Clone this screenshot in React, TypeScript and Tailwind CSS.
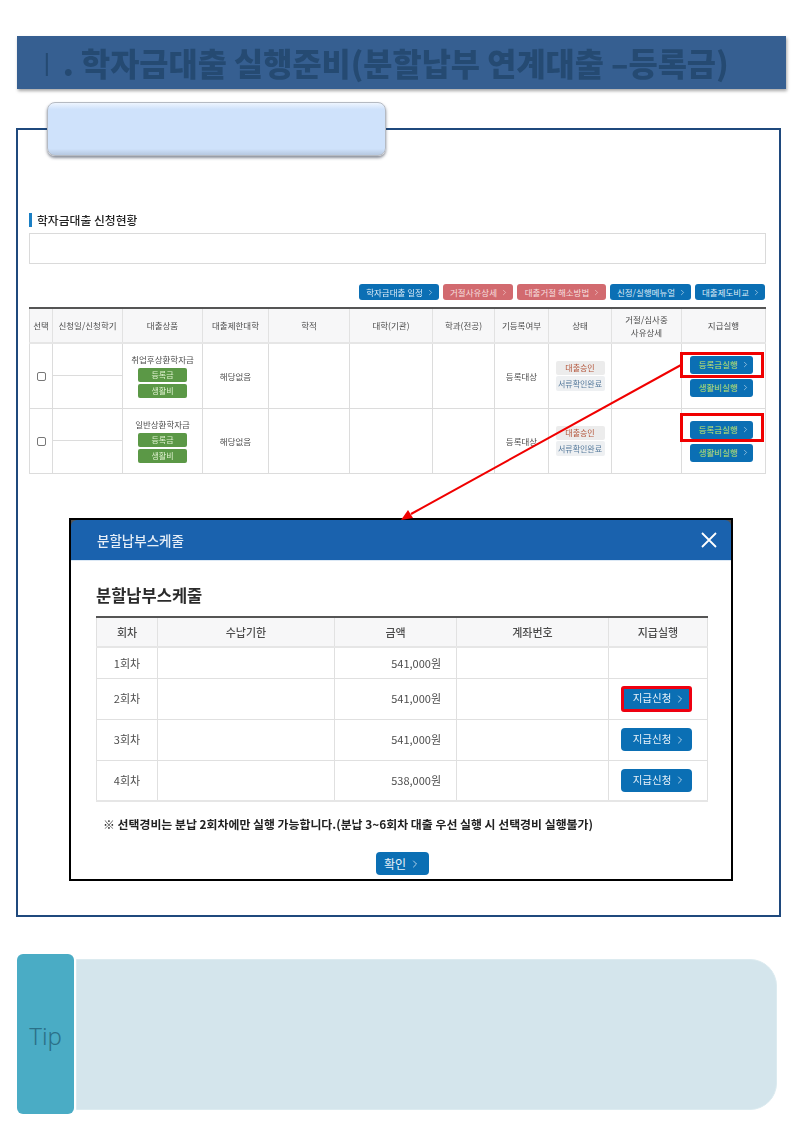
import { ChevronRight } from "lucide-react";

const sans = "font-['Noto_Sans_CJK_KR','Liberation_Sans',sans-serif]";

function Chev({ size = 9 }: { size?: number }) {
  return <ChevronRight size={size} strokeWidth={1.5} className="shrink-0" />;
}

function TopButton({ label, width, red }: { label: string; width: string; red?: boolean }) {
  return (
    <div
      className={`${width} ${red ? "bg-[#d26a6f] text-[#f6dfdf]" : "bg-[#0b6fb4] text-[#dcebf6]"} h-[16px] rounded-[3px] flex items-center justify-center gap-[3px] pl-[3px] text-[8.5px] leading-none`}
    >
      <span>{label}</span>
      <Chev />
    </div>
  );
}

function Green({ label }: { label: string }) {
  return (
    <div className="w-[49px] h-[14px] bg-[#5b9846] rounded-[2px] text-[#dff0cf] text-[8px] leading-none flex items-center justify-center">
      {label}
    </div>
  );
}

function PayButton({ label }: { label: string }) {
  return (
    <div className="w-[63px] h-[18px] bg-[#0b6fb4] rounded-[3px] text-[#bfe06a] text-[8.5px] leading-none flex items-center justify-center gap-[3px] pl-[6px]">
      <span>{label}</span>
      <span className="text-[#dcebf6]">
        <Chev />
      </span>
    </div>
  );
}

const th = "border-l border-[#e2e2e2] first:border-l-0 border-b-2 border-b-[#e6e6e6] font-normal bg-[#f7f7f8] p-0 text-center leading-[13px]";
const td = "border-l border-t border-[#dcdcdc] first:border-l-0 p-0 text-center align-middle";

function LoanRow({ product, tall }: { product: string; tall?: boolean }) {
  return (
    <tr className="h-[65px]">
      <td className={td}>
        <input type="checkbox" className="appearance-none block mx-auto w-[9px] h-[9px] rounded-[2px] border border-[#777] bg-white" />
      </td>
      <td className={td}>
        <div className="flex flex-col h-[64px]">
          <div className="h-[32px] border-b border-[#dcdcdc]" />
        </div>
      </td>
      <td className={td}>
        <div className="flex flex-col items-center gap-[2px] pb-[2px]">
          <div className="h-[13px] leading-[13px]">{product}</div>
          <Green label="등록금" />
          <Green label="생활비" />
        </div>
      </td>
      <td className={td}>해당없음</td>
      <td className={td} />
      <td className={td} />
      <td className={td} />
      <td className={td}>등록대상</td>
      <td className={td}>
        <div className="flex flex-col items-center gap-px">
          <div className="w-[49px] h-[14px] bg-[#ececec] rounded-[2px] text-[#b4553a] text-[8px] leading-[14px]">대출승인</div>
          <div className="w-[49px] h-[15px] bg-[#eef0f2] rounded-[2px] text-[#55799b] text-[8px] leading-[15px]">서류확인완료</div>
        </div>
      </td>
      <td className={td} />
      <td className={td}>
        <div className="relative flex flex-col items-center gap-[5px] pr-[5px]">
          <PayButton label="등록금실행" />
          <PayButton label="생활비실행" />
          <div
            className={`absolute left-[-2px] w-[84px] border-[3px] border-[#f00000] ${tall ? "top-[-8px] h-[29px]" : "top-[-4px] h-[26px]"}`}
          />
        </div>
      </td>
    </tr>
  );
}

function ApplyButton({ hot }: { hot?: boolean }) {
  return (
    <div
      className={`${hot ? "w-[71px] h-[26px] border-[3px] border-[#ee0010] rounded-[3px]" : "w-[71px] h-[23px] rounded-[4px]"} bg-[#0b6fb4] text-[#e8f2f9] text-[10.5px] leading-none flex items-center justify-center gap-[3px] pl-[7px]`}
    >
      <span>지급신청</span>
      <Chev size={12} />
    </div>
  );
}

const mth = "border-l border-[#e2e2e2] first:border-l-0 bg-[#f7f7f8] p-0 text-center font-medium border-b-2 border-b-[#e6e6e6]";
const mtd = "border-l border-t border-[#e0e0e0] first:border-l-0 p-0 text-center";

function ScheduleRow({ no, amount, height, button }: { no: string; amount: string; height: string; button?: "hot" | "plain" }) {
  return (
    <tr className={height}>
      <td className={mtd}>{no}</td>
      <td className={mtd} />
      <td className={`${mtd} text-right pr-[15px]`}>{amount}</td>
      <td className={mtd} />
      <td className={mtd}>
        {button && (
          <div className="flex justify-center pr-[4px]">
            <ApplyButton hot={button === "hot"} />
          </div>
        )}
      </td>
    </tr>
  );
}

export default function App() {
  return (
    <div className={`${sans} relative w-[802px] h-[1135px] bg-white pt-[36px] overflow-hidden`}>
      {/* Chapter banner */}
      <div className="ml-[17px] w-[769px] h-[53px] bg-[#365f91] shadow-[1px_2px_3px_rgba(0,0,0,0.35)] pl-[14px] flex items-center">
        <h1 className="text-[31.7px] leading-none font-extrabold text-[#254a72] blur-[0.7px] whitespace-nowrap">
          <span className="font-light">Ⅰ</span>. 학자금대출 실행준비(분할납부 연계대출 –등록금)
        </h1>
      </div>

      {/* Main frame */}
      <div className="relative mt-[39px] ml-[16px] w-[765px] h-[789px] border-[2px] border-[#1f497d] pt-[83px] pl-[11px]">
        <div className="absolute left-[29px] top-[-28px] w-[339px] h-[54px] rounded-[8px] border border-[#b5bac2] bg-[linear-gradient(180deg,#eef5fe_0%,#cfe2fb_12%,#cfe2fb_88%,#b6c8e0_100%)] shadow-[0_2px_3px_rgba(40,50,70,0.55)]" />

        <div className="blur-[0.35px]">
          <div className="flex items-center h-[14px] border-l-[3px] border-[#1a7fc4] pl-[5px] text-[11.8px] font-medium text-[#222] leading-none">
            학자금대출 신청현황
          </div>
          <div className="mt-[6px] w-[737px] h-[31px] border border-[#dadada] bg-white" />

          <div className="mt-[20px] w-[736px] flex justify-end gap-[4px]">
            <TopButton label="학자금대출 일정" width="w-[80px]" />
            <TopButton label="거절사유상세" width="w-[70px]" red />
            <TopButton label="대출거절 해소방법" width="w-[89px]" red />
            <TopButton label="신정/실행메뉴얼" width="w-[81px]" />
            <TopButton label="대출제도비교" width="w-[70px]" />
          </div>

          <table className="mt-[7px] w-[736px] table-fixed border-collapse border-t-2 border-t-[#555] border-b border-x border-x-[#dcdcdc] border-b-[#dcdcdc] text-[8.5px] text-[#4d4d4d]">
            <colgroup>
              <col className="w-[23px]" />
              <col className="w-[70px]" />
              <col className="w-[80px]" />
              <col className="w-[66px]" />
              <col className="w-[81px]" />
              <col className="w-[83px]" />
              <col className="w-[62px]" />
              <col className="w-[54px]" />
              <col className="w-[63px]" />
              <col className="w-[70px]" />
              <col className="w-[84px]" />
            </colgroup>
            <thead>
              <tr className="h-[35px]">
                <th className={th}>선택</th>
                <th className={th}>신청일/신청학기</th>
                <th className={th}>대출상품</th>
                <th className={th}>대출제한대학</th>
                <th className={th}>학적</th>
                <th className={th}>대학(기관)</th>
                <th className={th}>학과(전공)</th>
                <th className={th}>기등록여부</th>
                <th className={th}>상태</th>
                <th className={th}>
                  거절/심사중
                  <br />
                  사유상세
                </th>
                <th className={th}>지급실행</th>
              </tr>
            </thead>
            <tbody>
              <LoanRow product="취업후상환학자금" />
              <LoanRow product="일반상환학자금" tall />
            </tbody>
          </table>
        </div>

        {/* Schedule dialog */}
        <div className="mt-[44px] ml-[40px] w-[664px] h-[363px] border-2 border-black bg-white">
          <div className="bg-[#555]">
            <div className="h-[41px] bg-[#1a62ae] rounded-t-[6px] flex items-center justify-between pl-[26px] pr-[14px] border-b border-[#dbe8f5]">
              <span className="text-[13.5px] font-medium text-[#e6eef7] blur-[0.3px]">분할납부스케줄</span>
              <svg width="16" height="16" viewBox="0 0 16 16" className="text-white">
                <path d="M1 1 L15 15 M15 1 L1 15" stroke="currentColor" strokeWidth="1.8" fill="none" />
              </svg>
            </div>
          </div>
          <div className="pl-[25px] blur-[0.35px]">
            <h2 className="mt-[22px] h-[24px] leading-[24px] text-[16.5px] font-bold text-[#2b2b2b]">분할납부스케줄</h2>
            <table className="mt-[9px] w-[611px] table-fixed border-collapse border-t-2 border-t-[#555] border-x border-x-[#e0e0e0] border-b-2 border-b-[#e6e6e6] text-[11px] text-[#4d4d4d]">
              <colgroup>
                <col className="w-[61px]" />
                <col className="w-[177px]" />
                <col className="w-[122px]" />
                <col className="w-[152px]" />
                <col className="w-[99px]" />
              </colgroup>
              <thead>
                <tr className="h-[30px]">
                  <th className={mth}>회차</th>
                  <th className={mth}>수납기한</th>
                  <th className={mth}>금액</th>
                  <th className={mth}>계좌번호</th>
                  <th className={mth}>지급실행</th>
                </tr>
              </thead>
              <tbody>
                <ScheduleRow no="1회차" amount="541,000원" height="h-[31px]" />
                <ScheduleRow no="2회차" amount="541,000원" height="h-[41px]" button="hot" />
                <ScheduleRow no="3회차" amount="541,000원" height="h-[41px]" button="plain" />
                <ScheduleRow no="4회차" amount="538,000원" height="h-[41px]" button="plain" />
              </tbody>
            </table>
            <p className="mt-[13px] ml-[7px] h-[18px] leading-[18px] text-[11.9px] font-bold text-[#222] whitespace-nowrap">
              ※ 선택경비는 분납 2회차에만 실행 가능합니다.(분납 3~6회차 대출 우선 실행 시 선택경비 실행불가)
            </p>
          </div>
          <div className="mt-[19px] flex justify-center pl-[3px]">
            <div className="w-[53px] h-[23px] rounded-[4px] bg-[#0b6fb4] text-[#e8f2f9] text-[12px] flex items-center justify-center gap-[3px] leading-none">
              <span>확인</span>
              <Chev size={12} />
            </div>
          </div>
        </div>
      </div>

      {/* Tip */}
      <div className="mt-[37px] ml-[17px] flex items-center gap-[2px]">
        <div className="w-[57px] h-[160px] rounded-[6px] bg-[#4aacc5] flex items-center justify-center pt-[4px]">
          <span className="text-[24px] font-light text-[#2b7088] font-['Noto_Sans',sans-serif] leading-none">Tip</span>
        </div>
        <div className="w-[701px] h-[151px] bg-[#d4e5ec] border border-[#dcebf0] rounded-r-[27px]" />
      </div>

      {/* Callout arrow */}
      <svg width="802" height="1135" viewBox="0 0 802 1135" className="absolute inset-0 pointer-events-none">
        <line x1="681" y1="365" x2="411" y2="514" stroke="#f00000" strokeWidth="2" />
        <polygon points="401,520 408,510 413,518" fill="#f00000" />
      </svg>
    </div>
  );
}
